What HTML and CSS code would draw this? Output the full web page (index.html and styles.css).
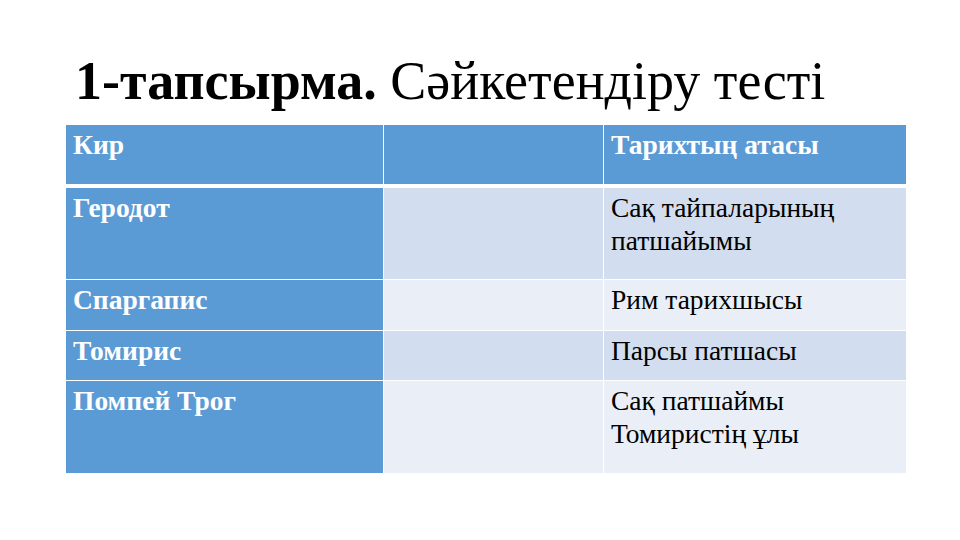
FILE: index.html
```html
<!DOCTYPE html>
<html lang="kk">
<head>
<meta charset="utf-8">
<title>1-тапсырма</title>
<link rel="stylesheet" href="styles.css">
</head>
<body>
<div class="slide">
  <h1 class="title"><b>1-тапсырма.</b> Сәйкетендіру тесті</h1>
  <div class="table">
    <div class="cell head first">Кир</div>
    <div class="cell head"></div>
    <div class="cell head">Тарихтың атасы</div>

    <div class="cell first">Геродот</div>
    <div class="cell band1"></div>
    <div class="cell band1 text">Сақ тайпаларының патшайымы</div>

    <div class="cell first">Спаргапис</div>
    <div class="cell band2"></div>
    <div class="cell band2 text">Рим тарихшысы</div>

    <div class="cell first">Томирис</div>
    <div class="cell band1"></div>
    <div class="cell band1 text">Парсы патшасы</div>

    <div class="cell first">Помпей Трог</div>
    <div class="cell band2"></div>
    <div class="cell band2 text">Сақ патшаймы<br>Томиристің ұлы</div>
  </div>
</div>
</body>
</html>
```

FILE: styles.css
```css
html, body {
  margin: 0;
  padding: 0;
  background: #ffffff;
}

.slide {
  width: 960px;
  height: 540px;
  box-sizing: border-box;
  padding: 49px 0 0 66px;
  font-family: "Liberation Serif", "Times New Roman", serif;
}

.title {
  margin: 0 0 11px 0;
  padding-left: 9px;
  font-size: 54px;
  line-height: 65px;
  font-weight: normal;
  color: #000;
  white-space: nowrap;
}

.title b {
  font-weight: bold;
}

.table {
  display: grid;
  grid-template-columns: 317px 219px 302px;
  grid-template-rows: 62px 91px 50px 49px 92px;
  column-gap: 1px;
  row-gap: 1px;
  width: 840px;
}

.cell {
  box-sizing: border-box;
  padding: 3px 7px 0 7px;
  font-size: 27.5px;
  line-height: 33px;
  color: #000;
}

.head {
  background: #5b9bd5;
  color: #fff;
  font-weight: bold;
  margin-bottom: 3px;
}

.first {
  background: #5b9bd5;
  color: #fff;
  font-weight: bold;
}

.band1 {
  background: #d2deef;
}

.band2 {
  background: #eaeff7;
}

.text {
  padding-right: 6px;
}
```
